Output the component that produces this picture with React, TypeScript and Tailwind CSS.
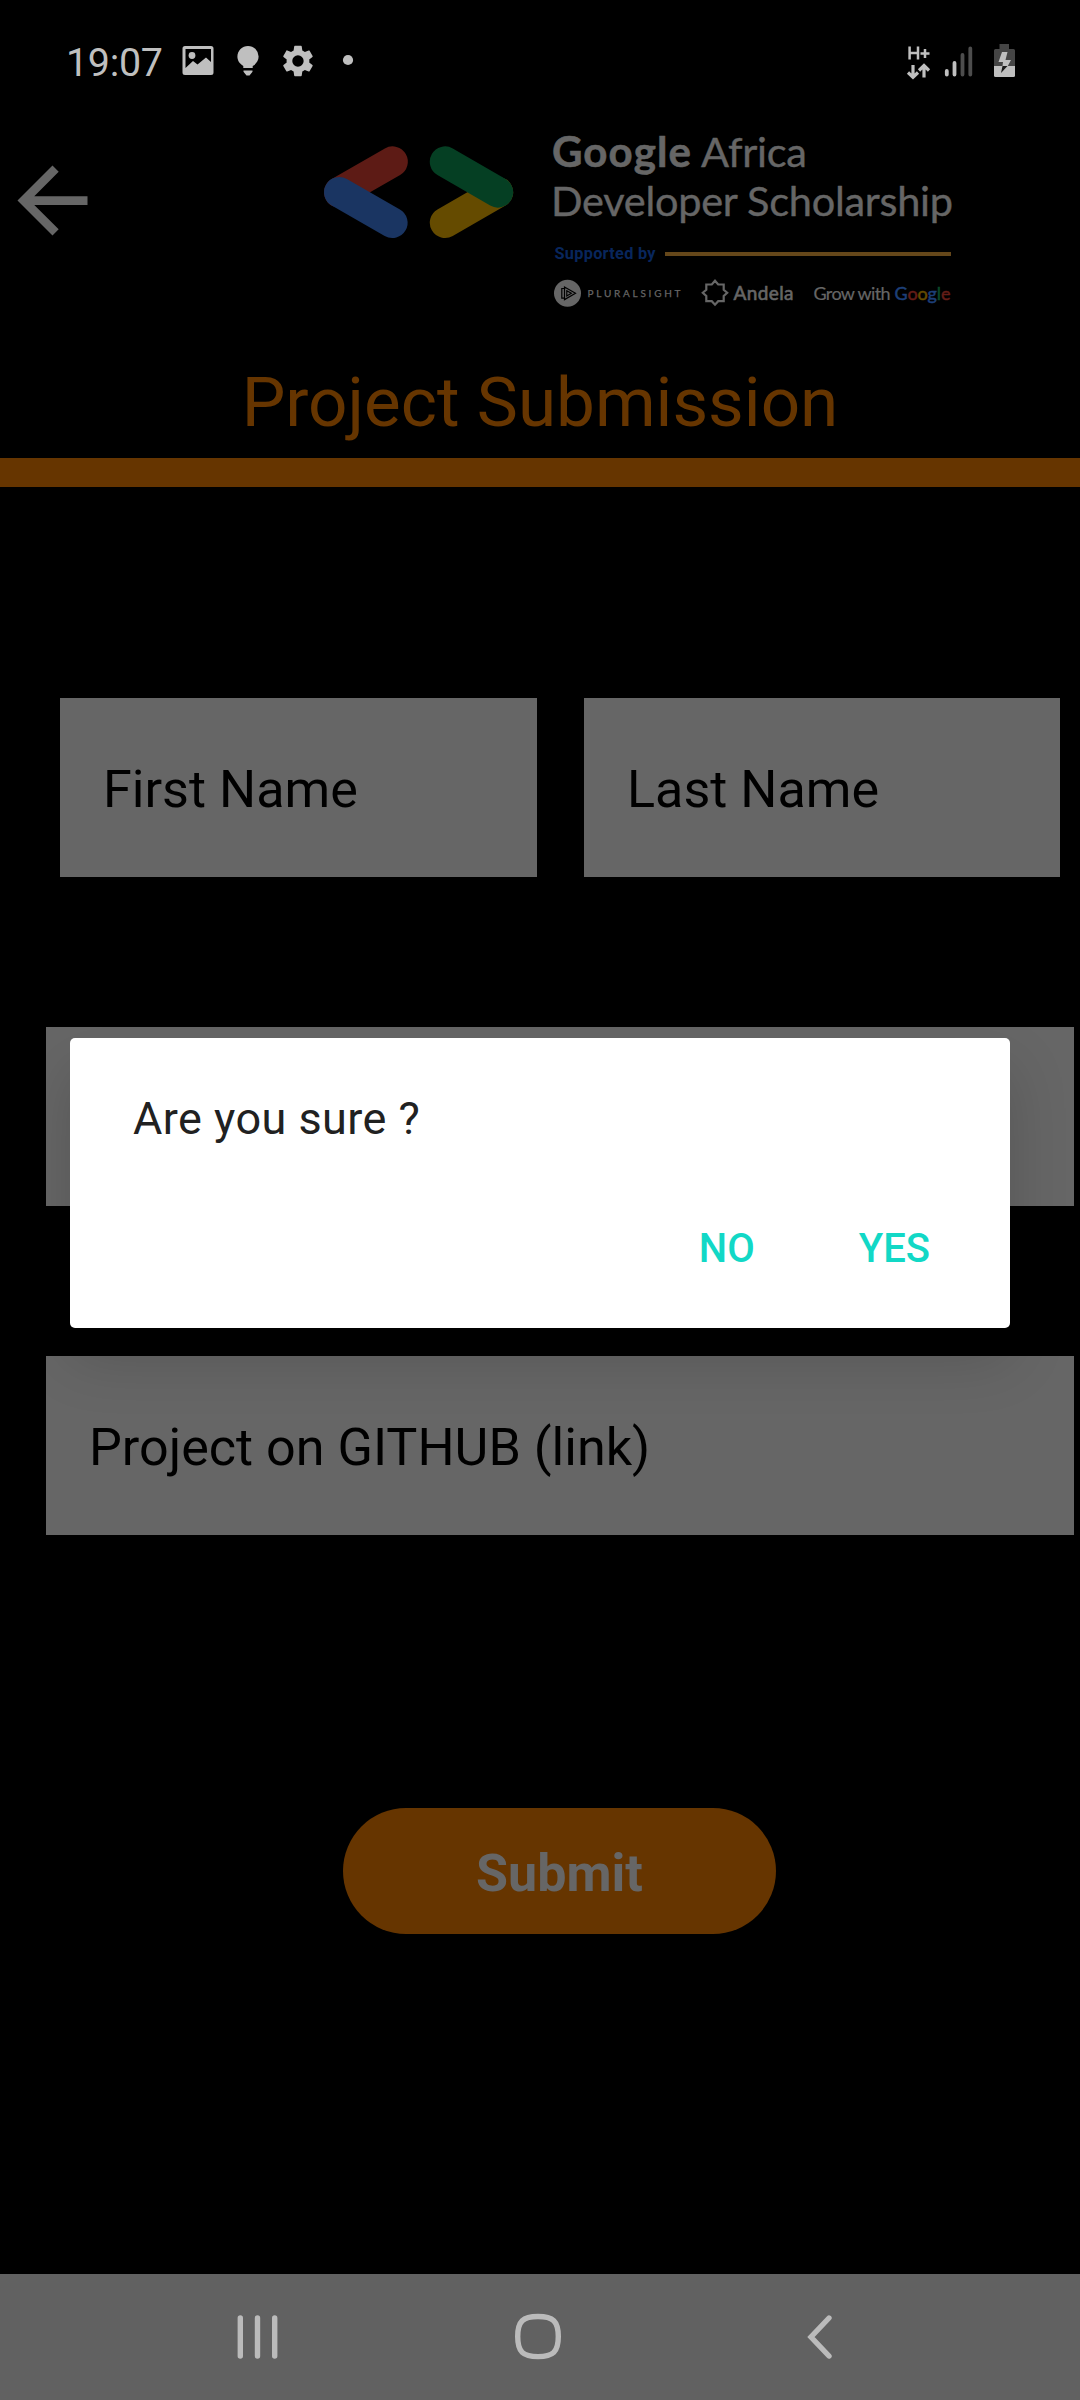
import React from "react";

function StatusBar() {
  return (
    <header className="flex h-[123px] w-full items-start justify-between pl-[66px] pr-[64px] pt-[36px] text-[#bfbfbf]">
      <div className="flex h-[50px] items-center">
        <span className="w-[96px] pt-[3px] text-[39.4px] leading-[50px] tracking-[-0.3px] whitespace-nowrap">19:07</span>
        <svg className="ml-[20px] h-[50px] w-[180px]" viewBox="182 36 180 50" fill="currentColor">
          <path fillRule="evenodd" d="M185 46h26a2.500 2.500 0 0 1 2.500 2.500v24a2.500 2.500 0 0 1-2.500 2.500h-26a2.500 2.500 0 0 1-2.500-2.500v-24a2.500 2.500 0 0 1 2.500-2.500zM185.500 49v19l7.500-7 4.500 3.500 8.500-7 5 4.500v-13z" />
          <circle cx="192" cy="55.500" r="3.400" />
          <path d="M248 46a10.600 10.600 0 0 0-10.600 10.600c0 4 2.200 7.400 5.900 9.300v2.100h9.400v-2.100c3.700-1.900 5.900-5.300 5.900-9.300A10.600 10.600 0 0 0 248 46zM243.500 70.500h9v1.300L249.500 75.500h-3l-3-3.700z" />
          <g transform="translate(279 42) scale(1.580)">
            <path d="M19.140 12.940c.04-.3.060-.61.060-.94 0-.32-.02-.64-.07-.94l2.030-1.580c.18-.14.230-.41.120-.61l-1.920-3.320c-.12-.22-.37-.29-.59-.22l-2.390.960c-.5-.38-1.030-.7-1.620-.94L14.400 2.810c-.04-.24-.24-.41-.48-.41h-3.840c-.24 0-.43.170-.47.410L9.250 5.350c-.59.240-1.130.570-1.620.940L5.240 5.330c-.22-.08-.47 0-.59.220L2.740 8.870c-.12.210-.08.470.120.610l2.030 1.580c-.05.300-.09.630-.09.940s.02.640.070.940l-2.030 1.580c-.18.140-.23.410-.12.610l1.920 3.320c.12.220.370.290.590.220l2.390-.96c.5.380 1.030.7 1.620.940l.36 2.540c.05.240.240.410.480.410h3.840c.24 0 .44-.17.470-.41l.36-2.540c.59-.24 1.130-.56 1.620-.94l2.390.960c.22.080.470 0 .590-.22l1.920-3.320c.12-.22.070-.47-.12-.61zM12 15.600A3.600 3.600 0 1 1 12 8.400a3.600 3.600 0 0 1 0 7.200z" />
          </g>
          <circle cx="348" cy="60" r="5.100" />
        </svg>
      </div>
      <svg className="h-[50px] w-[112px]" viewBox="904 36 112 50" fill="none" stroke="currentColor">
        <path strokeWidth="2.500" d="M909.600 46.500v13M918 46.500v13M909.600 53h8.400M920.500 53.500h9M925 49v9" />
        <path strokeWidth="3.200" d="M913 65v12M908 72.500l5 4.700 5-4.700M924 77.500V66M919 70.500l5-5 5 5" />
        <path strokeWidth="3.800" strokeLinecap="round" d="M946.800 71v3.500M954.500 63v11.500" />
        <path stroke="#4d4d4d" strokeWidth="3.800" strokeLinecap="round" d="M962.500 55v19.500M970.300 48.500v26" />
        <g stroke="none">
          <path fill="#454545" d="M999.500 44h9.500v5h4.500a1.500 1.500 0 0 1 1.500 1.500V66h-21V50.500a1.500 1.500 0 0 1 1.500-1.500h4z" />
          <path fill="#bfbfbf" d="M994 66h21v9.500a1.500 1.500 0 0 1-1.500 1.500h-18a1.500 1.500 0 0 1-1.500-1.500z" />
          <path fill="#bfbfbf" d="M1002 52h5.500l-2 8h5.500l-3.200 6h-5.300l.500-4h-4.500z" />
          <path fill="#1a1a1a" d="M1002.500 66h5l-6.500 7z" />
        </g>
      </svg>
    </header>
  );
}

function ScholarshipLogo() {
  return (
    <svg className="h-[187px] w-[660px]" viewBox="310 123 660 187" fontFamily="Lato, sans-serif" fill="#666666">
      <g strokeWidth="30.600" strokeLinecap="round">
        <path stroke="#5d1b15" d="M339.300 192.300L392.500 161.700" />
        <path stroke="#1a3562" d="M339.300 192.300L392.300 222.700" />
        <path stroke="#654b00" d="M445.100 222.700L497.900 192.300" />
        <path stroke="#053f23" d="M445.100 161.700L497.900 192.300" />
      </g>
      <text x="552" y="166.500" fontSize="42" fontWeight="700" stroke="#666666" strokeWidth=".6" textLength="139">Google</text>
      <text x="701" y="166.500" fontSize="41.500" stroke="#666666" strokeWidth=".4" textLength="106">Africa</text>
      <text x="551" y="216" fontSize="41.500" stroke="#666666" strokeWidth=".4" textLength="402">Developer Scholarship</text>
      <text x="554.500" y="259" fontFamily="Roboto, sans-serif" fontSize="16.300" fontWeight="700" fill="#08265c" textLength="101">Supported by</text>
      <path fill="#65471a" d="M665 252h286v4H665z" />
      <circle cx="567.500" cy="293.300" r="13.500" />
      <g fill="none" stroke="#000000" strokeWidth="1.200">
        <path d="M564.500 287v12.600l11-6.300zM564.500 288.500h-2.700v9.600h2.700M566.800 290.700v5.200l4.500-2.600z" />
      </g>
      <text x="587.500" y="297" fontSize="10" stroke="#666666" strokeWidth=".25" textLength="93">PLURALSIGHT</text>
      <path fill="none" stroke="#666666" strokeWidth="2.200" d="M715 280.800l3.200 3.700h5.500v5.300l3.500 2.900-3.500 3.200v5.300h-5.500l-3.200 3.500-3.200-3.500h-5.500v-5.300l-3.500-3.200 3.500-2.900v-5.300h5.500z" />
      <text x="733.500" y="300" fontSize="19" stroke="#666666" strokeWidth=".6" textLength="60">Andela</text>
      <text x="813.500" y="300" fontSize="18" stroke="#666666" strokeWidth=".2" textLength="77">Grow with</text>
      <text x="894.500" y="300" fontSize="18" strokeWidth=".5" textLength="56">
        <tspan fill="#1d3f78" stroke="#1d3f78">G</tspan>
        <tspan fill="#641d17" stroke="#641d17">o</tspan>
        <tspan fill="#654b00" stroke="#654b00">o</tspan>
        <tspan fill="#1d3f78" stroke="#1d3f78">g</tspan>
        <tspan fill="#0a4a28" stroke="#0a4a28">l</tspan>
        <tspan fill="#641d17" stroke="#641d17">e</tspan>
      </text>
    </svg>
  );
}

function Field({ label, className }: { label?: string; className: string }) {
  return (
    <div className={"flex h-[179px] items-center bg-[#666666] pt-[5px] pl-[43px] text-[52.100px] text-black whitespace-nowrap " + className}>
      {label}
    </div>
  );
}

function ConfirmDialog() {
  return (
    <div className="absolute top-[1038px] left-[70px] flex h-[290px] w-[940px] flex-col rounded-[5px] bg-white shadow-[0_30px_60px_rgba(0,0,0,0.16)]">
      <p className="mt-[51px] ml-[63px] text-[45px] leading-[60px] tracking-[0.45px] text-[#212121]">Are you sure ?</p>
      <div className="mt-[70px] mr-[80px] flex justify-end gap-[104px] text-[40px] leading-[60px] font-medium text-[#12d8c6]">
        <button>NO</button>
        <button>YES</button>
      </div>
    </div>
  );
}

function NavigationBar() {
  return (
    <nav className="flex h-[126px] items-center bg-[#616161] pb-px pl-[236px] text-[#bbbbbb]">
      <svg className="h-[48px] w-[44px]" viewBox="0 0 44 48" fill="none" stroke="currentColor" strokeWidth="5.400" strokeLinecap="round">
        <path d="M4.300 5v38M21.500 5v38M38.700 5v38" />
      </svg>
      <svg className="ml-[234px] h-[48px] w-[48px]" viewBox="0 0 48 48" fill="none" stroke="currentColor" strokeWidth="5.400">
        <path d="M24 3.500C39 3.500 44.300 8 44.300 23.500S39 43.600 24 43.600 3.700 39 3.700 23.500 9 3.500 24 3.500z" />
      </svg>
      <svg className="ml-[244px] h-[48px] w-[28px]" viewBox="0 0 28 48" fill="none" stroke="currentColor" strokeWidth="5.400" strokeLinecap="round">
        <path d="M23 5L5 24l18 19" />
      </svg>
    </nav>
  );
}

export default function App() {
  return (
    <div className="relative flex h-[2400px] w-[1080px] flex-col overflow-hidden bg-black font-['Roboto',sans-serif]">
      <StatusBar />
      <div className="flex h-[187px]">
        <svg className="mt-[25px] h-[105px] w-[105px]" viewBox="0 0 24 24" fill="#666666">
          <path d="M20 11H7.830l5.590-5.590L12 4l-8 8 8 8 1.410-1.410L7.830 13H20v-2z" />
        </svg>
        <div className="ml-[205px]">
          <ScholarshipLogo />
        </div>
      </div>
      <h1 className="mt-[53px] h-[95px] text-center text-[69.200px] leading-[80px] text-[#663500]">Project Submission</h1>
      <div className="h-[29px] bg-[#663500]" />
      <main className="flex grow flex-col pt-[211px]">
        <div className="flex gap-[47px] pl-[60px]">
          <Field label="First Name" className="w-[477px]" />
          <Field label="Last Name" className="w-[476px]" />
        </div>
        <Field className="mt-[150px] ml-[46px] w-[1028px]" />
        <Field label="Project on GITHUB (link)" className="mt-[150px] ml-[46px] w-[1028px]" />
        <button className="mt-[273px] ml-[343px] h-[126px] w-[433px] rounded-full bg-[#663500] pt-[5px] text-[52px] font-bold text-[#666666]">
          Submit
        </button>
      </main>
      <NavigationBar />
      <ConfirmDialog />
    </div>
  );
}
